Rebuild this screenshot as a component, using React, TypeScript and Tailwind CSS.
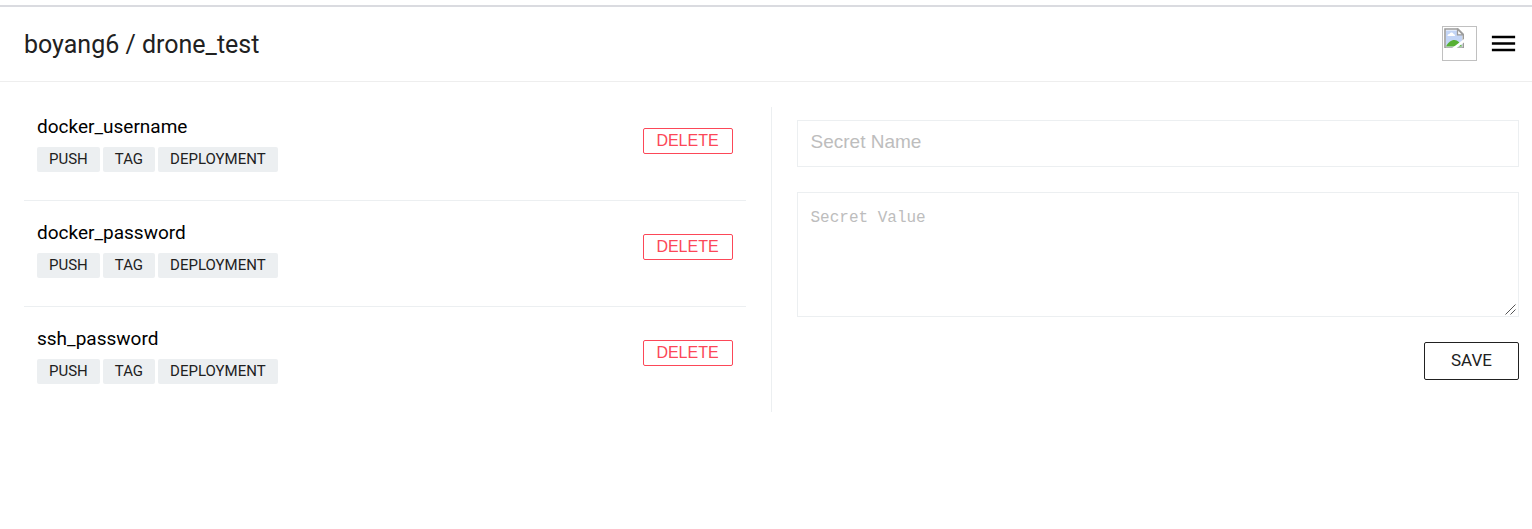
const secrets = ["docker_username", "docker_password", "ssh_password"];
const events = ["PUSH", "TAG", "DEPLOYMENT"];

function BrokenAvatar() {
  return (
    <span role="img" aria-label="avatar" className="block size-[35px] border border-[#c0c0c0] p-px">
      <svg width="20" height="20" viewBox="0 0 20 20" className="block">
        <path d="M1 1h13l5.500 5.500V20H1z" fill="#fff" />
        <path d="M2 2.500h11.500l4.500 4.500V18.500H2z" fill="#c3d5f6" />
        <path d="M3.500 8c0-1.500 1-2 2-2 .6-2 3.500-2 4 0 1.200 0 1.500 1 1.500 2z" fill="#fff" />
        <path d="M2 18.500C4 14.500 7 12 10.500 12c3 0 6 3 7.500 6.500z" fill="#57b034" />
        <path d="M1 20V1h13l5.300 5.500V20H1" fill="none" stroke="#9c9c9c" strokeWidth="1.600" />
        <path d="M20.500 10.500v3.500L12 20.500H7.500z" fill="#fff" />
        <path d="M13.500 1.300v5.500h5.500z" fill="#fff" stroke="#9c9c9c" strokeWidth="1.300" />
      </svg>
    </span>
  );
}

function SecretRow({ name }: { name: string }) {
  return (
    <li className="flex items-start justify-between border-b border-[#eceff1] px-[13px] pt-5 pb-7 first:pt-2 last:border-b-0">
      <div>
        <div className="text-[19px] leading-6 text-black">{name}</div>
        <div className="mt-2 flex gap-[3px]">
          {events.map((event) => (
            <span
              key={event}
              className="rounded-[2px] bg-[#eceff1] px-3 text-[15px] leading-[25px] text-[#212121]"
            >
              {event}
            </span>
          ))}
        </div>
      </div>
      <button
        type="button"
        aria-label={`Delete ${name}`}
        className="mt-[13px] h-[26px] w-[90px] rounded-[2px] border border-[#fc4758] bg-white font-['Liberation_Sans',sans-serif] text-[16px] leading-6 text-[#fc4758]"
      >
        DELETE
      </button>
    </li>
  );
}

export default function App() {
  return (
    <div className="bg-white pt-[5px] font-[Roboto,sans-serif] text-[#212121]">
      <header className="flex items-start justify-between border-t-2 border-b border-t-[#dadbe0] border-b-[#eeeeee] pt-[19px] pr-[13px] pb-[18px] pl-6">
        <h1 className="text-[25px] leading-[37px]">boyang6 / drone_test</h1>
        <div className="flex items-center gap-[11px]">
          <BrokenAvatar />
          <button type="button" aria-label="Menu" className="text-black">
            <svg width="31" height="31" viewBox="0 0 24 24" fill="currentColor" className="block">
              <path d="M3 18h18v-2H3v2zm0-5h18v-2H3v2zm0-7v2h18V6H3z" />
            </svg>
          </button>
        </div>
      </header>

      <main className="grid grid-cols-2 pt-[25px] pr-[13px] pl-6">
        <ul className="border-r border-[#eceff1] pr-[25px]">
          {secrets.map((name) => (
            <SecretRow key={name} name={name} />
          ))}
        </ul>
        <form className="flex flex-col gap-[25px] pt-[13px] pl-[25px]">
          <input
            type="text"
            aria-label="Secret Name"
            placeholder="Secret Name"
            className="h-[47px] w-full border border-[#eceff1] px-[13px] pb-1 font-['Liberation_Sans',sans-serif] text-[19px] placeholder:text-[#bdbdbd] focus:outline-none"
          />
          <div className="relative">
            <textarea
              aria-label="Secret Value"
              placeholder="Secret Value"
              className="block h-[125px] w-full resize-y border border-[#eceff1] p-[13px] font-['Liberation_Mono',monospace] text-[16px] leading-6 placeholder:text-[#bdbdbd] focus:outline-none [&::-webkit-resizer]:bg-transparent"
            />
            <svg
              width="12"
              height="12"
              viewBox="0 0 12 12"
              className="pointer-events-none absolute right-0.5 bottom-0.5"
              fill="none"
              stroke="#555555"
            >
              <path d="M.5 11.500l10-10M5.500 11.500l5-5" />
            </svg>
          </div>
          <button
            type="button"
            className="h-[38px] w-[95px] self-end rounded-[2px] border border-[#212121] bg-white text-[17px]"
          >
            SAVE
          </button>
        </form>
      </main>
    </div>
  );
}
